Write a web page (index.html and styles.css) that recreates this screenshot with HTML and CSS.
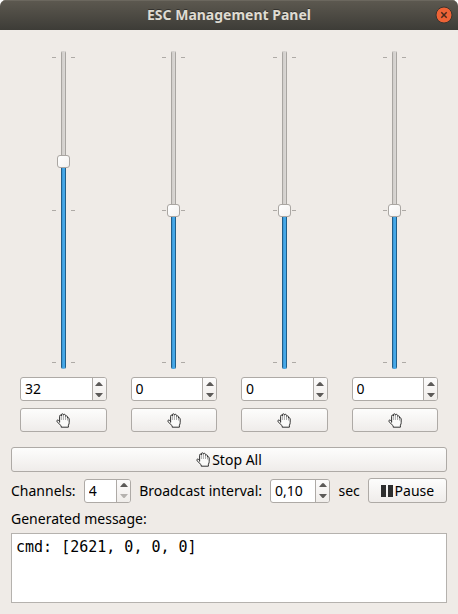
FILE: index.html
```html
<!DOCTYPE html>
<html lang="en">
<head>
<meta charset="utf-8">
<title>ESC Management Panel</title>
<link rel="stylesheet" href="styles.css">
</head>
<body>
<svg class="defs" aria-hidden="true">
  <symbol id="hand" viewBox="0 0 14 15">
    <path class="palm" d="M3.6 9.6V3.2Q3.6 2.1 4.5 2.1T5.4 3V1.9Q5.4.8 6.4.8T7.4 1.8V2.4Q7.5 1.3 8.4 1.3T9.5 2.5V3.6Q9.7 2.8 10.5 2.8T11.5 3.8V5.3Q11.8 4.7 12.5 4.9T13.2 5.9V9.5Q13.2 11 12.4 12.2V14.2H5.2V12.8L1.1 8.8Q.4 8 1.1 7.3T2.6 7.4L3.6 8.5"/>
    <path class="fingers" d="M5.4 3V7M7.4 2.4V7M9.5 3.6V7M11.5 5.3V7.5"/>
  </symbol>
  <symbol id="up" viewBox="0 0 8 4"><path d="M0 4L3 .6Q4-.4 5 .6L8 4Z"/></symbol>
  <symbol id="down" viewBox="0 0 8 4"><path d="M0 0L3 3.4Q4 4.4 5 3.4L8 0Z"/></symbol>
</svg>
<div class="window">
  <header class="titlebar">
    <h1 class="title">ESC Management Panel</h1>
    <button class="close" type="button" aria-label="Close">
      <svg viewBox="0 0 18 18"><circle cx="9" cy="9" r="8"/><path d="M6.3 6.3L11.7 11.7M11.7 6.3L6.3 11.7"/></svg>
    </button>
  </header>
  <main class="panel">
    <section class="channels" aria-label="Channels">
      <div class="channel">
        <input class="slider raised" type="range" min="-100" max="100" value="32" aria-label="Channel 1 level">
        <div class="spin">
          <input type="text" inputmode="numeric" value="32" aria-label="Channel 1 value">
          <div class="steps">
            <button type="button" aria-label="Increase"><svg><use href="#up"/></svg></button>
            <button type="button" aria-label="Decrease"><svg><use href="#down"/></svg></button>
          </div>
        </div>
        <button class="button" type="button" aria-label="Stop channel 1"><svg class="hand"><use href="#hand"/></svg></button>
      </div>
      <div class="channel">
        <input class="slider" type="range" min="-100" max="100" value="0" aria-label="Channel 2 level">
        <div class="spin">
          <input type="text" inputmode="numeric" value="0" aria-label="Channel 2 value">
          <div class="steps">
            <button type="button" aria-label="Increase"><svg><use href="#up"/></svg></button>
            <button type="button" aria-label="Decrease"><svg><use href="#down"/></svg></button>
          </div>
        </div>
        <button class="button" type="button" aria-label="Stop channel 2"><svg class="hand"><use href="#hand"/></svg></button>
      </div>
      <div class="channel">
        <input class="slider" type="range" min="-100" max="100" value="0" aria-label="Channel 3 level">
        <div class="spin">
          <input type="text" inputmode="numeric" value="0" aria-label="Channel 3 value">
          <div class="steps">
            <button type="button" aria-label="Increase"><svg><use href="#up"/></svg></button>
            <button type="button" aria-label="Decrease"><svg><use href="#down"/></svg></button>
          </div>
        </div>
        <button class="button" type="button" aria-label="Stop channel 3"><svg class="hand"><use href="#hand"/></svg></button>
      </div>
      <div class="channel">
        <input class="slider" type="range" min="-100" max="100" value="0" aria-label="Channel 4 level">
        <div class="spin">
          <input type="text" inputmode="numeric" value="0" aria-label="Channel 4 value">
          <div class="steps">
            <button type="button" aria-label="Increase"><svg><use href="#up"/></svg></button>
            <button type="button" aria-label="Decrease"><svg><use href="#down"/></svg></button>
          </div>
        </div>
        <button class="button" type="button" aria-label="Stop channel 4"><svg class="hand"><use href="#hand"/></svg></button>
      </div>
    </section>
    <button class="button" type="button"><svg class="hand"><use href="#hand"/></svg>Stop All</button>
    <div class="settings">
      <label for="count">Channels:</label>
      <div class="spin spin-count">
        <input id="count" type="text" inputmode="numeric" value="4">
        <div class="steps">
          <button type="button" aria-label="Increase"><svg><use href="#up"/></svg></button>
          <button type="button" aria-label="Decrease" disabled><svg><use href="#down"/></svg></button>
        </div>
      </div>
      <label for="interval">Broadcast interval:</label>
      <div class="spin spin-interval">
        <input id="interval" type="text" inputmode="decimal" value="0,10">
        <div class="steps">
          <button type="button" aria-label="Increase"><svg><use href="#up"/></svg></button>
          <button type="button" aria-label="Decrease"><svg><use href="#down"/></svg></button>
        </div>
      </div>
      <span>sec</span>
      <button class="button pause" type="button"><svg class="bars" viewBox="0 0 12 12"><path d="M0 0H5V12H0ZM7 0H12V12H7Z"/></svg>Pause</button>
    </div>
    <label class="message-label" for="message">Generated message:</label>
    <textarea class="message" id="message" readonly>cmd: [2621, 0, 0, 0]</textarea>
  </main>
</div>
</body>
</html>
```

FILE: styles.css
```css
* {
  box-sizing: border-box;
}

body {
  margin: 0;
  background: #fff;
  color: #000;
  font: 14px/20px "Noto Sans", "Open Sans", sans-serif;
}

button,
input,
textarea {
  margin: 0;
  padding: 0;
  border: 0;
  color: inherit;
  font: inherit;
}

.defs {
  display: none;
}

.window {
  display: flex;
  flex-direction: column;
  min-height: 100vh;
  overflow: hidden;
  border-radius: 6px 6px 0 0;
  background: #efebe7;
}

.titlebar {
  display: grid;
  grid-template-columns: 18px 1fr 18px;
  align-items: center;
  height: 30px;
  padding: 0 5px;
  background: linear-gradient(#5d5950, #3d3c37);
  box-shadow: inset 0 1px #6b675e;
}

.title {
  grid-column: 2;
  margin: 0;
  color: #dfdbd2;
  font-size: 14px;
  font-weight: 700;
  text-align: center;
  text-shadow: 0 -1px #33322e;
}

.close {
  width: 18px;
  height: 18px;
  background: none;
}

.close svg {
  display: block;
}

.close circle {
  fill: #ee6336;
  stroke: #3a342f;
}

.close path {
  stroke: #4a2a1c;
  stroke-width: 1.5;
}

.panel {
  display: flex;
  flex: 1;
  flex-direction: column;
  padding: 21px 11px 11px;
}

.channels {
  display: grid;
  flex: 1;
  grid-template-columns: repeat(4, 1fr);
  gap: 24px;
  padding: 0 9px;
  margin-bottom: 15px;
}

.channel {
  display: flex;
  flex-direction: column;
  min-width: 0;
}

.slider {
  --level: 50%;
  --tick: linear-gradient(#aeaaa6, #aeaaa6);
  flex: 1;
  align-self: center;
  width: 23px;
  min-height: 120px;
  margin-bottom: 8px;
  appearance: none;
  writing-mode: vertical-lr;
  direction: rtl;
  background:
    var(--tick) left top 6px / 4px 1px,
    var(--tick) right top 6px / 4px 1px,
    var(--tick) left center / 4px 1px,
    var(--tick) right center / 4px 1px,
    var(--tick) left bottom 6px / 4px 1px,
    var(--tick) right bottom 6px / 4px 1px;
  background-repeat: no-repeat;
}

.slider.raised {
  --level: 35%;
}

.slider::-webkit-slider-runnable-track {
  width: 5px;
  border-radius: 2px;
  background:
    linear-gradient(90deg, #a8a5a1 1px, transparent 1px 4px, #a8a5a1 4px) top / 100% var(--level) no-repeat,
    linear-gradient(90deg, #215f8a 1px, #3f9bd9 1px 2px, #45a8e8 2px 4px, #215f8a 4px) bottom / 100% calc(100% - var(--level)) no-repeat,
    linear-gradient(90deg, #cdcac7, #dedbd8);
}

.slider::-webkit-slider-thumb {
  width: 13px;
  height: 13px;
  margin-left: -4px;
  appearance: none;
  border: 1px solid #aaa6a2;
  border-radius: 3px;
  background: linear-gradient(135deg, #fff, #f3f1ef);
}

.spin {
  display: flex;
  height: 24px;
  overflow: hidden;
  border: 1px solid #aeaaa6;
  border-radius: 3px;
  background: #fff;
}

.spin input {
  flex: 1;
  width: 0;
  min-width: 0;
  padding-left: 4px;
  background: none;
}

.steps {
  display: grid;
  grid-template-rows: 1fr 1fr;
  width: 14px;
  border-left: 1px solid #aeaaa6;
  background: linear-gradient(#fcfbfb, #f0edea);
}

.steps button {
  display: grid;
  place-items: center;
  background: none;
}

.steps svg {
  width: 8px;
  height: 4px;
  fill: #5c5a58;
}

.steps button:disabled svg {
  fill: #b5b2af;
}

.button {
  display: flex;
  align-items: center;
  justify-content: center;
  gap: 2px;
  height: 25px;
  border: 1px solid #aeaaa6;
  border-radius: 3px;
  background: linear-gradient(#fdfdfc, #efecea);
}

.channel .button {
  height: 24px;
  margin-top: 7px;
}

.hand {
  width: 14px;
  height: 15px;
}

.palm {
  fill: #fbfbfa;
  stroke: #333;
}

.fingers {
  fill: none;
  stroke: #aaa;
}

.settings {
  display: flex;
  align-items: center;
  gap: 8px;
  margin: 6px 0;
  white-space: nowrap;
}

.spin-count {
  width: 48px;
}

.spin-interval {
  width: 61px;
}

.pause {
  width: 80px;
  margin-left: auto;
}

.bars {
  width: 12px;
  height: 12px;
  fill: #2e2e2e;
}

.message-label {
  margin-bottom: 4px;
}

.message {
  width: 100%;
  height: 70px;
  padding: 3px 4px;
  border: 1px solid #b5b2ae;
  background: #fff;
  font: 15px/20px "DejaVu Sans Mono", monospace;
  resize: none;
}
```
